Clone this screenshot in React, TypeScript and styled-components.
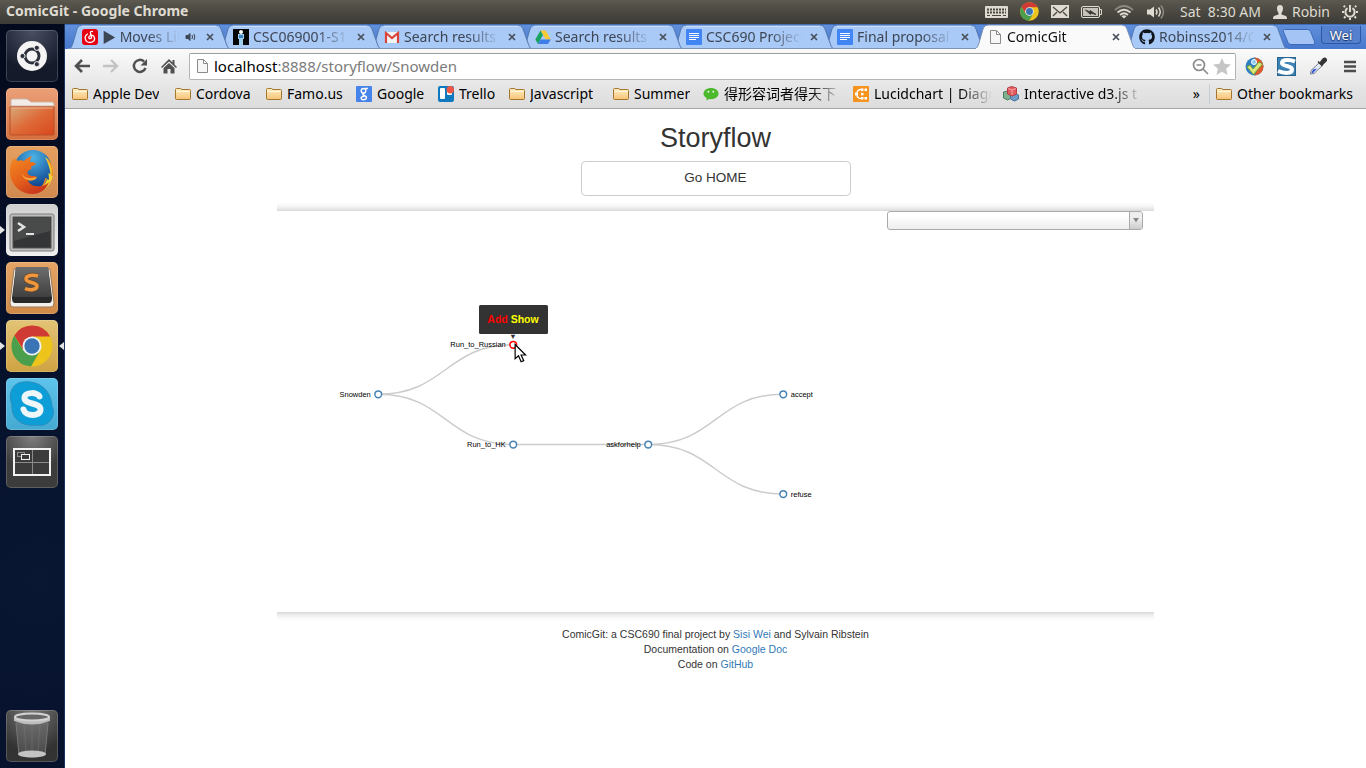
import React from 'react';
import styled, { createGlobalStyle, css } from 'styled-components';
import { FaGithub } from 'react-icons/fa';

const GlobalStyle = createGlobalStyle`
  *, *::before, *::after { box-sizing: border-box; }
  body { margin: 0; background: #fff; }
  button { font: inherit; color: inherit; padding: 0; border: 0; background: none; }
  svg { display: block; flex: none; }
`;

const uiFont = '"Noto Sans", "Noto Sans CJK SC", sans-serif';

/* ---------- shell ---------- */

const Desktop = styled.div`
  display: flex;
  flex-direction: column;
  min-height: 100vh;
  font-family: ${uiFont};
`;

const TopPanel = styled.header`
  display: flex;
  align-items: center;
  justify-content: space-between;
  height: 24px;
  padding: 0 8px 0 6px;
  background: linear-gradient(#5b5950, #4a4840 50%, #3c3b37);
  color: #dfdbd2;
  font-size: 14px;
  white-space: nowrap;
`;

const WindowTitle = styled.strong`
  font-size: 14px;
  font-weight: 700;
  line-height: 20px;
  padding-bottom: 2px;
`;

const Indicators = styled.div`
  display: flex;
  align-items: center;
  gap: 12px;
  line-height: 20px;
  padding-bottom: 1px;
`;

const StatusGroup = styled.div`
  display: flex;
  align-items: center;
  gap: 12px;
  margin-right: 2px;
`;

const UserName = styled.span`
  display: flex;
  align-items: center;
  gap: 5px;
`;

const Workspace = styled.div`
  display: flex;
  flex: 1;
`;

const Launcher = styled.nav`
  display: flex;
  flex-direction: column;
  gap: 6px;
  width: 65px;
  flex: none;
  padding: 6px;
  background: radial-gradient(circle at 60% 75%, #091733, #06102a 45%, #040a1d);
  border-right: 1px solid #1c3560;
`;

const LauncherButton = styled.button<{ $bg: string; $last?: boolean; $left?: boolean; $right?: boolean }>`
  position: relative;
  width: 52px;
  height: 52px;
  flex: none;
  border-radius: 5px;
  background: ${p => p.$bg};
  box-shadow: inset 0 0 0 1px rgba(255, 255, 255, 0.18);
  ${p => p.$last && css`margin-top: auto;`}
  ${p => p.$left && css`
    &::before {
      content: '';
      position: absolute;
      left: -6px;
      top: 22px;
      border: 4px solid transparent;
      border-left: 5px solid #e4e4e4;
      border-right: 0;
    }
  `}
  ${p => p.$right && css`
    &::after {
      content: '';
      position: absolute;
      right: -6px;
      top: 22px;
      border: 4px solid transparent;
      border-right: 5px solid #e4e4e4;
      border-left: 0;
    }
  `}
`;

const LauncherIcon = styled.span`
  display: grid;
  place-items: center;
`;

const Browser = styled.main`
  display: flex;
  flex-direction: column;
  flex: 1;
  min-width: 0;
  background: #fff;
`;

/* ---------- tab strip ---------- */

const TabStrip = styled.div`
  display: flex;
  height: 25px;
  padding-left: 3px;
  background: linear-gradient(#6190dc, #4878cd);
  box-shadow: inset 0 1px #3e6cba;
`;

const TabItem = styled.div<{ $order: number }>`
  position: relative;
  z-index: ${p => p.$order};
  display: flex;
  align-items: center;
  flex: 0 1 151px;
  min-width: 0;
  height: 25px;
  padding: 0 3px 0 14px;
`;

const TabShape = styled.svg`
  position: absolute;
  left: 0;
  top: 0;
  width: calc(100% + 12px);
  height: 25px;
`;

const TabLabel = styled.button<{ $active?: boolean }>`
  position: relative;
  display: flex;
  align-items: center;
  gap: 4px;
  flex: 1;
  min-width: 0;
  font-size: 14px;
  line-height: 20px;
  color: ${p => (p.$active ? '#111' : '#3d4654')};
`;

const fade = css`
  overflow: hidden;
  white-space: nowrap;
  mask-image: linear-gradient(to left, transparent, #000 32px);
`;

const TabText = styled.span`
  ${fade}
  flex: 1;
  text-align: left;
`;

const CloseButton = styled.button`
  position: relative;
  margin-left: 6px;
  width: 12px;
  height: 12px;
  display: grid;
  place-items: center;
`;

const NewTabButton = styled.button`
  margin: 5px 0 0 6px;
  width: 34px;
  height: 16px;
`;

const ProfileButton = styled.button`
  margin: 2px 5px 0 auto;
  width: 40px;
  height: 18px;
  border: 1px solid #2c57a5;
  border-top: 0;
  border-radius: 0 0 4px 4px;
  background: #5580cd;
  color: #fff;
  font-size: 13px;
  line-height: 18px;
  text-shadow: 0 0 2px #1b3566, 0 1px 1px #1b3566;
`;

/* ---------- toolbar ---------- */

const Toolbar = styled.div`
  display: flex;
  align-items: center;
  height: 32px;
  padding: 2px 8px 0;
  gap: 12px;
  background: linear-gradient(#fafafa, #e9e9e9);
`;

const NavButtons = styled.div`
  display: flex;
  gap: 12px;
`;

const IconButton = styled.button`
  display: grid;
  place-items: center;
  width: 17px;
  height: 20px;
`;

const Omnibox = styled.label`
  display: flex;
  align-items: center;
  gap: 4px;
  flex: 1;
  min-width: 0;
  height: 27px;
  margin-right: -3px;
  padding: 0 4px 0 5px;
  border: 1px solid #b4b4b4;
  border-top-color: #9d9d9d;
  border-radius: 2px;
  background: #fff;
`;

const AddressField = styled.span`
  position: relative;
  flex: 1;
  display: flex;
  font-size: 15px;
  line-height: 24px;
`;

const AddressText = styled.span`
  color: #7b7b7b;
  b { font-weight: 400; color: #000; }
`;

const AddressInput = styled.input`
  position: absolute;
  inset: 0;
  width: 100%;
  padding: 0;
  border: 0;
  outline: 0;
  background: transparent;
  font: inherit;
`;

const Extensions = styled.div`
  display: flex;
  align-items: center;
  gap: 15px;
`;

const BookmarksBar = styled.div`
  display: flex;
  align-items: center;
  height: 28px;
  padding: 0 8px 1px 7px;
  border-bottom: 1px solid #a5a5a5;
  background: linear-gradient(#e8e8e8, #dcdcdc);
  font-size: 14px;
  line-height: 20px;
  color: #000;
`;

const Bookmark = styled.a<{ $width: number }>`
  display: flex;
  align-items: center;
  gap: 5px;
  flex: 0 1 ${p => p.$width}px;
  min-width: 0;
  color: inherit;
  text-decoration: none;
  white-space: nowrap;
`;

const BookmarkText = styled.span<{ $fade?: boolean }>`
  overflow: hidden;
  ${p => p.$fade && css`${fade} flex: 0 0 118px;`}
`;

const Overflow = styled.button`
  margin-left: auto;
  padding: 0 9px;
  font-size: 14px;
`;

const Separator = styled.span`
  width: 1px;
  height: 20px;
  margin-right: 6px;
  background: #c4ccd6;
`;

/* ---------- page (shown at the 75% zoom level) ---------- */

const Page = styled.div`
  zoom: 0.75;
  font-family: "Liberation Sans", Arial, sans-serif;
  font-size: 14px;
  line-height: 20px;
  color: #333;
`;

const Container = styled.div`
  width: 100%;
  max-width: 1170px;
  margin: 0 auto;
`;

const PageHeader = styled.div`
  display: flex;
  flex-direction: column;
  align-items: center;
  padding-top: 19px;
`;

const Title = styled.h1`
  margin: 0 0 10px;
  font-size: 36px;
  font-weight: 500;
  line-height: 40px;
`;

const HomeButton = styled.button`
  width: 360px;
  height: 47px;
  border: 1px solid #ccc;
  border-radius: 6px;
  background: #fff;
  color: #333;
  font-size: 18px;
  line-height: 24px;
`;

const Rule = styled.hr<{ $up?: boolean }>`
  height: 12px;
  margin: ${p => (p.$up ? '8px 0 0' : '0 0 8px')};
  border: 0;
  box-shadow: inset 0 ${p => (p.$up ? '-12px' : '12px')} 12px -12px rgba(0, 0, 0, 0.3);
`;

const PickerRow = styled.div`
  display: flex;
  justify-content: flex-end;
  padding-right: 15px;
`;

const Picker = styled.div`
  position: relative;
  width: 342px;
  height: 25px;
`;

const PickerSelect = styled.select`
  appearance: none;
  display: block;
  width: 100%;
  height: 100%;
  border: 1px solid #aaa;
  border-radius: 4px;
  background: linear-gradient(#fff 20%, #eee);
`;

const PickerArrow = styled.span`
  position: absolute;
  top: 1px;
  right: 1px;
  bottom: 1px;
  width: 18px;
  display: grid;
  place-items: center;
  border-left: 1px solid #aaa;
  border-radius: 0 3px 3px 0;
  background: linear-gradient(#eee 40%, #ccc);
  pointer-events: none;
`;

const Flow = styled.div`
  position: relative;
  height: 509px;
`;

const FlowChart = styled.svg`
  width: 100%;
  height: 100%;
  font-size: 10px;
  fill: #000;
`;

const Tip = styled.div`
  position: absolute;
  left: 269px;
  top: 100px;
  width: 92px;
  padding: 12px 0;
  border-radius: 2px;
  background: #333;
  font-weight: 700;
  line-height: 15px;
  text-align: center;
  &::after {
    content: '\\25BC';
    position: absolute;
    left: 0;
    top: 100%;
    width: 100%;
    margin-top: -1px;
    font-size: 10px;
    line-height: 10px;
    font-weight: 400;
    color: #333;
  }
`;

const TipLink = styled.a<{ $color: string }>`
  color: ${p => p.$color};
  text-decoration: none;
`;

const Pointer = styled.svg`
  position: absolute;
  left: 316px;
  top: 151px;
`;

const Footer = styled.footer`
  text-align: center;
  p { margin: 0; }
  a { color: #337ab7; text-decoration: none; }
`;

/* ---------- icons ---------- */

const ChromeLogo = ({ size }: { size: number }) => (
  <svg width={size} height={size} viewBox="0 0 44 44">
    <circle cx="22" cy="22" r="21.500" fill="#ecc41c" />
    <path d="M22 12h19A21.500 21.500 0 0 0 3.500 11L13.500 27 22 22z" fill="#d03a35" />
    <path d="M3.500 11A21.500 21.500 0 0 0 21 43.500L30.500 27 22 22l-9 5z" fill="#4b9f4c" />
    <circle cx="22" cy="22" r="10" fill="#eef1f2" />
    <circle cx="22" cy="22" r="8" fill="#3a74b4" />
  </svg>
);

const UbuntuIcon = () => (
  <svg width="52" height="52" viewBox="0 0 52 52">
    <circle cx="26" cy="26" r="15" fill="#f4f4f4" />
    <circle cx="26" cy="26" r="7" fill="none" stroke="#2c303c" strokeWidth="3" />
    <g fill="#2c303c" stroke="#f4f4f4" strokeWidth="1">
      <circle cx="16.500" cy="26" r="2.600" />
      <circle cx="30.800" cy="17.800" r="2.600" />
      <circle cx="30.800" cy="34.200" r="2.600" />
    </g>
  </svg>
);

const FilesIcon = () => (
  <svg width="52" height="52" viewBox="0 0 52 52">
    <defs>
      <linearGradient id="files" x1="0" y1="0" x2="1" y2="1">
        <stop offset="0" stopColor="#d8a878" /><stop offset=".5" stopColor="#de6a38" /><stop offset="1" stopColor="#d8481c" />
      </linearGradient>
    </defs>
    <path d="M5 18v-6q0-1 1-1h15l4 3h21q2 0 2 2v2z" fill="#f3ece6" stroke="#c9b5a8" />
    <path d="M4 19h44v27q0 1-1 1H5q-1 0-1-1z" fill="url(#files)" stroke="#b94f28" />
    <path d="M5 20h42" stroke="#f3b492" />
  </svg>
);

const FirefoxIcon = () => (
  <svg width="52" height="52" viewBox="0 0 52 52">
    <defs>
      <radialGradient id="globe" cx=".5" cy=".2" r=".8"><stop offset="0" stopColor="#4cb4e6" /><stop offset="1" stopColor="#0d3f8c" /></radialGradient>
      <linearGradient id="fox" x1="0" y1="0" x2=".6" y2="1"><stop offset="0" stopColor="#f48a20" /><stop offset=".6" stopColor="#e4601b" /><stop offset="1" stopColor="#c8371c" /></linearGradient>
    </defs>
    <circle cx="27" cy="23" r="19" fill="url(#globe)" />
    <path d="M39 11c7 5 9 11 8 17-1 11-10 19-20 19 8-3 12-7 14-14l2 1-.5-7 2 1c-.5-6-2.500-11-5.500-17z" fill="#f4d431" />
    <path d="M42 14c4 5 5 11 4 16M40 32c-1 6-5 11-10 14" fill="none" stroke="#f08a22" strokeWidth="1.500" />
    <path d="M8 12c-5 7-5 16-2 23 4 8 11 13 20 13 8 0 14-4 17-12-4 4-8 5-12 4-4 0-8-2-9-6 4 2 7-1 9-3-2-2-5 0-8-2-2-1-2-4 0-5 2 0 3-1 2-3l5-3c-1-2-4-2-6-2 0-3 1-4 2-6-4 1-6 3-8 5-3-1-5-1-6 0-2-1-3-2-4-3z" fill="url(#fox)" />
    <path d="M31 31c-2 4-6 4-9 3-4-1-6-4-6-7 2 5 6 5 9 5z" fill="#f9a535" />
  </svg>
);

const TerminalIcon = () => (
  <svg width="52" height="52" viewBox="0 0 52 52">
    <rect x="4" y="10" width="44" height="37" rx="2" fill="#bdbdbd" stroke="#7c7c7c" />
    <rect x="7" y="13" width="38" height="31" fill="#333536" stroke="#555" />
    <path d="M8 14h36v13L8 37z" fill="#494b4b" />
    <path d="m12 19 6 4-6 4" fill="none" stroke="#e3e3e3" strokeWidth="2.500" />
    <path d="M20 30h8" stroke="#e3e3e3" strokeWidth="2" />
  </svg>
);

const SublimeIcon = () => (
  <svg width="52" height="52" viewBox="0 0 52 52">
    <defs><linearGradient id="key" x1="0" y1="0" x2="0" y2="1"><stop offset="0" stopColor="#6d6d6d" /><stop offset="1" stopColor="#404040" /></linearGradient></defs>
    <path d="M8 7h36l4 34q0 4-3 4H7q-3 0-3-4z" fill="#f3f0ec" stroke="#9b7a58" />
    <path d="M10 5h32l4 31q0 5-3 5H9q-3 0-3-5z" fill="#292929" />
    <path d="M10 5h32l3 28q0 2-2 2H9q-2 0-2-2z" fill="url(#key)" />
    <path d="M32 14c-5-1.500-12-1-12 3 0 4 11 3 11 7s-7 4.500-12 2.500" fill="none" stroke="#6a4a2a" strokeWidth="5" />
    <path d="M32 14c-5-1.500-12-1-12 3 0 4 11 3 11 7s-7 4.500-12 2.500" fill="none" stroke="#f0963c" strokeWidth="3.500" />
  </svg>
);

const SkypeIcon = () => (
  <svg width="52" height="52" viewBox="0 0 52 52">
    <path d="M18 4c10-1 26 3 28 24 5 10-4 22-16 19C14 49 5 39 6 27 1 14 8 4 18 4z" fill="#0d9ed8" stroke="#2b8cbb" />
    <path d="M33.500 18.500c-1.500-4.500-15-5-15 1.500 0 7 16 4 16 11.500 0 7.500-15 7-17 0" fill="none" stroke="#eef6fa" strokeWidth="6" strokeLinecap="round" />
  </svg>
);

const WorkspaceIcon = () => (
  <svg width="52" height="52" viewBox="0 0 52 52" fill="none">
    <rect x="8" y="13" width="36" height="26" fill="#3b3b3b" stroke="#f2f2f2" strokeWidth="2" />
    <path d="M26.500 14v24M9 26.500h34" stroke="#8b8b8b" />
    <rect x="11.500" y="16.500" width="7" height="4" stroke="#8b8b8b" />
    <rect x="15.500" y="18.500" width="8" height="5" fill="#3b3b3b" stroke="#f2f2f2" />
  </svg>
);

const TrashIcon = () => (
  <svg width="52" height="52" viewBox="0 0 52 52">
    <path d="M10 13h32l-3 32q-13 4-26 0z" fill="#7a7a7a" fillOpacity=".4" stroke="#777" />
    <path d="M18 14l2 30M26 15v30M34 14l-2 30" stroke="#777" strokeOpacity=".5" />
    <ellipse cx="26" cy="44" rx="14" ry="3.500" fill="#c4c4c4" />
    <path d="M8 7v4q18 7 36 0V7z" fill="#bdbdbd" />
    <ellipse cx="26" cy="7" rx="17" ry="3.500" fill="#666" stroke="#d2d2d2" strokeWidth="2" />
  </svg>
);

const FolderIcon = () => (
  <svg width="16" height="14" viewBox="0 0 16 14">
    <defs><linearGradient id="folder" x1="0" y1="0" x2="0" y2="1"><stop offset="0" stopColor="#fff0c4" /><stop offset="1" stopColor="#f6c276" /></linearGradient></defs>
    <path d="M.5 11.500v-9q0-1 1-1h4q1 0 1 1h8q1 0 1 1v8q0 1-1 1h-13q-1 0-1-1z" fill="url(#folder)" stroke="#a5762f" />
    <path d="M1.500 4.500h13" stroke="#fff6dc" />
  </svg>
);

const PageIcon = () => (
  <svg width="15" height="16" viewBox="0 0 15 16">
    <path d="M2.500 1.500h6l4 4v9h-10zM8.500 1.500v4h4" fill="#f6f6f6" stroke="#8b8b8b" />
  </svg>
);

const NetEaseIcon = () => (
  <svg width="16" height="16" viewBox="0 0 16 16">
    <rect width="16" height="16" rx="3" fill="#e60012" />
    <path d="M10.500 2.500c-1.500-.5-2.500.5-2 2l1 4c.3 1.500-2.700 1.800-2.700-.2 0-2 3.700-3 5.200-.8 1.700 3-.5 6-4 6-5 0-6.500-6-2.500-8.500" fill="none" stroke="#fff" strokeWidth="1.300" strokeLinecap="round" />
  </svg>
);

const CampusIcon = () => (
  <svg width="16" height="16" viewBox="0 0 16 16">
    <rect width="16" height="16" fill="#050505" />
    <circle cx="8" cy="3" r="2" fill="#fff" />
    <path d="M5 5h6v5h-1v6H6v-6H5z" fill="#9fcdec" />
    <path d="M6 6h4v3H6z" fill="#3c82bd" />
  </svg>
);

const GmailIcon = () => (
  <svg width="16" height="16" viewBox="0 0 16 16">
    <path d="M1 3h14v11H1z" fill="#f3f3f3" />
    <path d="M2 14V4l6 5 6-5v10" fill="none" stroke="#d8453a" strokeWidth="2.200" />
  </svg>
);

const DriveIcon = () => (
  <svg width="16" height="16" viewBox="0 0 16 16">
    <path d="M5.500 1.500h5l5.300 9h-5z" fill="#fbc932" />
    <path d="M5.500 1.500 8 6l-5 9L.3 10.500z" fill="#1aa260" />
    <path d="M5.500 10.500h10.300L13 15H3z" fill="#3f7de8" />
  </svg>
);

const DocsIcon = () => (
  <svg width="16" height="16" viewBox="0 0 16 16">
    <rect width="16" height="16" rx="1" fill="#4285f4" />
    <path d="M3 4.500h10M3 6.500h10M3 8.500h10M3 10.500h7" stroke="#fff" />
  </svg>
);

const GoogleIcon = () => (
  <svg width="16" height="16" viewBox="0 0 16 16">
    <rect width="16" height="16" rx="1" fill="#4683ea" />
    <g fill="none" stroke="#fff" strokeWidth="1.400">
      <circle cx="7.500" cy="4.800" r="2.300" />
      <path d="M9 2.500h3M9 6.800c-4 1-2 2.200 0 3 2.500 1 1.500 4-1.300 4-3.500 0-3.700-3.500.8-3.600" />
    </g>
  </svg>
);

const TrelloIcon = () => (
  <svg width="16" height="16" viewBox="0 0 16 16">
    <rect width="16" height="16" rx="2" fill="#0f79bf" />
    <rect x="2" y="2" width="5" height="11" rx="1" fill="#fff" />
    <rect x="9" y="2" width="5" height="7" rx="1" fill="#fff" />
    <circle cx="12.300" cy="3.700" r="3.700" fill="#ef5744" />
  </svg>
);

const WeChatIcon = () => (
  <svg width="16" height="16" viewBox="0 0 17 16">
    <path d="M8.500 1.500c4.500 0 8 2.600 8 6s-3.500 6-8 6l-2-.2L3.500 15l.5-2.500C2 11.500.5 9.700.5 7.500c0-3.400 3.500-6 8-6z" fill="#4cb82c" />
    <circle cx="5.700" cy="5.500" r="1" fill="#fff" /><circle cx="11" cy="5.500" r="1" fill="#fff" />
  </svg>
);

const LucidIcon = () => (
  <svg width="16" height="16" viewBox="0 0 16 16">
    <rect width="16" height="16" rx="1" fill="#f79420" />
    <path d="M4 7.500q0-4 4-4h1M4 8.500q0 4 4 4h1" fill="none" stroke="#fff" strokeWidth="1.300" />
    <g fill="#fff"><rect x="2" y="6.500" width="3" height="3" /><rect x="8" y="2.500" width="2.500" height="2.500" /><rect x="11.500" y="2.500" width="2.500" height="2.500" /><rect x="8" y="6.800" width="2.500" height="2.500" /><rect x="8" y="11" width="2.500" height="2.500" /><rect x="11.500" y="11" width="2.500" height="2.500" /></g>
  </svg>
);

const CubesIcon = () => (
  <svg width="16" height="16" viewBox="0 0 16 16">
    <path d="M0.500 6l4-1 4 2v5l-4 2-4-2z" fill="#7fb08d" stroke="#4c7d60" />
    <path d="M7.500 8l4-1 4 2v4l-4 2-4-2z" fill="#6f9bc8" stroke="#48719b" />
    <path d="M4.500 2l4-1.500 5 1.500v6l-4 2-5-2z" fill="#e25b5f" stroke="#b53c44" />
    <path d="m5 2.500 4 1.500 4-1.500M9 4v5" fill="none" stroke="#f3a4a4" />
  </svg>
);

const GithubMark = () => <FaGithub size={16} color="#10151c" />;

const StatusIcons = () => (
  <StatusGroup>
    <svg width="23" height="12" viewBox="0 0 23 12">
      <rect width="23" height="12" rx="1" fill="#dfdbd2" />
      <path d="M2 3.500h19M2 6.500h19" stroke="#4a4840" strokeWidth="2" strokeDasharray="2 1" />
      <path d="M2 9.500h3M7 9.500h9M18 9.500h3" stroke="#4a4840" />
    </svg>
    <ChromeLogo size={19} />
    <svg width="18" height="13" viewBox="0 0 18 13">
      <rect width="18" height="13" fill="#dfdbd2" />
      <path d="m2 2 7 6 7-6M2 11l4-4M16 11l-4-4" fill="none" stroke="#4a4840" strokeWidth="1.300" />
    </svg>
    <svg width="21" height="12" viewBox="0 0 21 12">
      <rect x=".5" y=".5" width="18" height="11" rx="1.500" fill="none" stroke="#dfdbd2" />
      <rect x="2" y="2" width="15" height="8" fill="#c6c2b9" />
      <path d="M19 3.500h1.500v5H19" fill="none" stroke="#dfdbd2" />
      <path d="M4.500 4 9 6V4.500l6 4-5.500-1.500v1.500z" fill="#3c3b37" stroke="#3c3b37" />
    </svg>
    <svg width="20" height="14" viewBox="0 0 20 14" fill="none" strokeWidth="1.700">
      <path d="M1 5Q10-3 19 5" stroke="#8d8a82" />
      <path d="M3.500 7.500Q10 2 16.500 7.500M6 10Q10 6.500 14 10" stroke="#dfdbd2" />
      <path d="m10 13.500-2.500-2.300q2.500-2 5 0z" fill="#dfdbd2" />
    </svg>
    <svg width="20" height="16" viewBox="0 0 20 16" fill="none" stroke="#dfdbd2" strokeWidth="1.500">
      <path d="M1 5.500h3l4-3v11l-4-3H1z" fill="#dfdbd2" stroke="none" />
      <path d="M10 5.500q2 2.500 0 5M12.500 3.500q3.500 4.500 0 9" />
      <path d="M15 1.500q5 6.500 0 13" stroke="#8d8a82" />
    </svg>
  </StatusGroup>
);

/* ---------- parts ---------- */

type TabData = { title: string; icon: React.ReactNode; active?: boolean; audio?: boolean };

const tabs: TabData[] = [
  { title: '▶ Moves Like', icon: <NetEaseIcon />, audio: true },
  { title: 'CSC069001-S15', icon: <CampusIcon /> },
  { title: 'Search results', icon: <GmailIcon /> },
  { title: 'Search results', icon: <DriveIcon /> },
  { title: 'CSC690 Project', icon: <DocsIcon /> },
  { title: 'Final proposal', icon: <DocsIcon /> },
  { title: 'ComicGit', icon: <PageIcon />, active: true },
  { title: 'Robinss2014/C', icon: <GithubMark /> },
];

const Tab = ({ tab, order }: { tab: TabData; order: number }) => (
  <TabItem $order={order}>
    <TabShape viewBox="0 0 163 25" preserveAspectRatio="none">
      <path
        d="M0 25C3 25 4 22 5 19L9 5Q10 1 14 1H148Q152 1 153 5L158 19C159 22 160 25 163 25z"
        fill={tab.active ? '#fafafa' : '#a9c9f6'}
        stroke={tab.active ? '#7890b6' : '#5377b0'}
      />
      {tab.active && <path d="M2 24.500H161" stroke="#fafafa" />}
      {!tab.active && <path d="M14 2.500H148" stroke="#c9defb" />}
      {!tab.active && <path d="M0 24.500H163" stroke="#7d93b8" />}
    </TabShape>
    <TabLabel $active={tab.active}>
      {tab.icon}
      <TabText>{tab.title}</TabText>
      {tab.audio && (
        <svg width="14" height="12" viewBox="0 0 14 12" fill="none" stroke="#3d4654">
          <path d="M2 4.500h2l2-2v7l-2-2H2z" fill="#3d4654" />
          <path d="M8 4q1 2 0 4M10 3q1.500 3 0 6" />
        </svg>
      )}
    </TabLabel>
    <CloseButton aria-label="Close tab">
      <svg width="8" height="8" viewBox="0 0 8 8"><path d="m1 1 6 6m0-6L1 7" stroke="#484f5a" strokeWidth="1.700" /></svg>
    </CloseButton>
  </TabItem>
);

const bookmarks = [
  { text: 'Apple Dev', width: 103, icon: <FolderIcon /> },
  { text: 'Cordova', width: 91, icon: <FolderIcon /> },
  { text: 'Famo.us', width: 90, icon: <FolderIcon /> },
  { text: 'Google', width: 82, icon: <GoogleIcon /> },
  { text: 'Trello', width: 71, icon: <TrelloIcon /> },
  { text: 'Javascript', width: 104, icon: <FolderIcon /> },
  { text: 'Summer', width: 90, icon: <FolderIcon /> },
  { text: '得形容词者得天下', width: 150, icon: <WeChatIcon />, fade: true },
  { text: 'Lucidchart | Diagr', width: 150, icon: <LucidIcon />, fade: true },
  { text: 'Interactive d3.js t', width: 150, icon: <CubesIcon />, fade: true },
];

const launcherItems = [
  { name: 'Dash', bg: 'radial-gradient(circle at 50% 0, #4b5164, #141a2a 70%)', icon: <UbuntuIcon /> },
  { name: 'Files', bg: 'linear-gradient(#eba078, #d5703e)', icon: <FilesIcon /> },
  { name: 'Firefox', bg: 'linear-gradient(#e5a060, #d08a50)', icon: <FirefoxIcon /> },
  { name: 'Terminal', bg: 'linear-gradient(#cfcfcf, #efefef)', icon: <TerminalIcon />, left: true },
  { name: 'Sublime Text', bg: 'linear-gradient(#e5a565, #d08a48)', icon: <SublimeIcon /> },
  { name: 'Chrome', bg: 'linear-gradient(#e2c376, #cfa343)', icon: <ChromeLogo size={42} />, left: true, right: true },
  { name: 'Skype', bg: 'linear-gradient(#5fc4ec, #45a9d2)', icon: <SkypeIcon /> },
  { name: 'Workspaces', bg: 'radial-gradient(circle at 50% 0, #808080, #3c3c3c 60%)', icon: <WorkspaceIcon /> },
  { name: 'Trash', bg: 'radial-gradient(circle at 50% 0, #777, #333 70%)', icon: <TrashIcon />, last: true },
];

const links = [
  'M135 219C225 219 225 153 315 153',
  'M135 219C225 219 225 286 315 286',
  'M315 286H495',
  'M495 286C585 286 585 219 675 219',
  'M495 286C585 286 585 352 675 352',
];

const nodes = [
  { name: 'Snowden', x: 135, y: 219 },
  { name: 'Run_to_Russian', x: 315, y: 153, hot: true },
  { name: 'Run_to_HK', x: 315, y: 286 },
  { name: 'askforhelp', x: 495, y: 286 },
  { name: 'accept', x: 675, y: 219, leaf: true },
  { name: 'refuse', x: 675, y: 352, leaf: true },
];

export default function App() {
  return (
    <Desktop>
      <GlobalStyle />
      <TopPanel>
        <WindowTitle>ComicGit - Google Chrome</WindowTitle>
        <Indicators>
          <StatusIcons />
          <span>Sat&nbsp; 8:30 AM</span>
          <UserName>
            <svg width="14" height="14" viewBox="0 0 14 14" fill="#dfdbd2">
              <path d="M7 0c2.200 0 3 1.500 3 3.500S9 7 8.500 8v1.500L13 11q1 .5 1 3H0q0-2.500 1-3l4.500-1.500V8C5 7 4 5.500 4 3.500S4.800 0 7 0z" />
            </svg>
            Robin
          </UserName>
          <svg width="16" height="16" viewBox="0 0 16 16" fill="none" stroke="#dfdbd2">
            <path d="M5.500 4.200a4.600 4.600 0 1 0 5 0" strokeWidth="2" />
            <path d="M8 1v7" strokeWidth="2" />
            <path d="M3 3 1.700 1.700M13 3l1.300-1.300M2 8H0M14 8h2M3.500 12.500 2 14M12.500 12.500 14 14M8 14v2" strokeWidth="2" />
          </svg>
        </Indicators>
      </TopPanel>

      <Workspace>
        <Launcher>
          {launcherItems.map(i => (
            <LauncherButton key={i.name} aria-label={i.name} $bg={i.bg} $left={i.left} $right={i.right} $last={i.last}>
              <LauncherIcon>{i.icon}</LauncherIcon>
            </LauncherButton>
          ))}
        </Launcher>

        <Browser>
          <TabStrip>
            {tabs.map((t, i) => (
              <Tab key={i} tab={t} order={t.active ? 20 : 10 - i} />
            ))}
            <NewTabButton aria-label="New tab">
              <svg width="34" height="16" viewBox="0 0 34 16">
                <path d="M2.500.5h23q2 0 3 2l4 10q1 3-1.500 3H9q-2 0-3-2L1.500 3Q.5.500 2.500.5z" fill="#a3c4f4" stroke="#3d69b8" />
              </svg>
            </NewTabButton>
            <ProfileButton>Wei</ProfileButton>
          </TabStrip>

          <Toolbar>
            <NavButtons>
              <IconButton aria-label="Back">
                <svg width="16" height="14" viewBox="0 0 16 14" fill="none" stroke="#505050" strokeWidth="2.600"><path d="M16 7H3M8 1 2 7l6 6" /></svg>
              </IconButton>
              <IconButton aria-label="Forward">
                <svg width="16" height="14" viewBox="0 0 16 14" fill="none" stroke="#c3c3c3" strokeWidth="2.400"><path d="M0 7h13M8 1l6 6-6 6" /></svg>
              </IconButton>
              <IconButton aria-label="Reload">
                <svg width="16" height="16" viewBox="0 0 16 16"><path d="M13.500 10A6 6 0 1 1 12 3.500" fill="none" stroke="#505050" strokeWidth="2.500" /><path d="M15 1v6.500H8.500z" fill="#505050" /></svg>
              </IconButton>
              <IconButton aria-label="Home">
                <svg width="16" height="16" viewBox="0 0 16 16" fill="#505050"><path d="M8 1 0 9l1 1 7-6.500 7 6.500 1-1-2.500-2.500V2h-2v2.500z" /><path d="m8 5-5.500 5v5.500h4V11h3v4.500h4V10z" /></svg>
              </IconButton>
            </NavButtons>
            <Omnibox>
              <PageIcon />
              <AddressField>
                <AddressText><b>localhost</b>:8888/storyflow/Snowden</AddressText>
                <AddressInput aria-label="Address" />
              </AddressField>
              <svg width="17" height="17" viewBox="0 0 17 17" fill="none" stroke="#8a8a8a" strokeWidth="1.700">
                <circle cx="7" cy="7" r="5.500" /><path d="m11 11 5 5M4.500 7h5" />
              </svg>
              <svg width="18" height="17" viewBox="0 0 18 17"><path d="m9 0 2.600 5.800 6.400.7-4.800 4.200 1.400 6.300L9 13.700 3.400 17l1.400-6.300L0 6.500l6.400-.7z" fill="#c6c6c6" /></svg>
            </Omnibox>
            <Extensions>
              <IconButton aria-label="Checker">
                <svg width="19" height="19" viewBox="0 0 19 19">
                  <circle cx="9.500" cy="9.500" r="9" fill="#2f7fc0" />
                  <path d="M9.500.5a9 9 0 0 1 0 18l4-9z" fill="#dd5a2c" />
                  <circle cx="9" cy="5" r="2.500" fill="#8cc8ee" stroke="#fff" />
                  <path d="m2 10 3-2 3 4 6-7 3.500 2L8.500 17.500z" fill="#dbe97c" stroke="#7c9f31" />
                </svg>
              </IconButton>
              <IconButton aria-label="Stylish">
                <svg width="19" height="19" viewBox="0 0 19 19">
                  <rect x=".5" y=".5" width="18" height="18" fill="#3d82b4" stroke="#29648f" />
                  <path d="M18 4.500C12 2 5 2.500 5 6c0 4 10 2 10 6.500S7 16.500 1 14" fill="none" stroke="#fff" strokeWidth="4" />
                </svg>
              </IconButton>
              <IconButton aria-label="Colour picker">
                <svg width="18" height="18" viewBox="0 0 18 18">
                  <path d="m10 6 3 3-8 7.500-3.500.500.500-3.500z" fill="#e5ebf7" stroke="#77808f" />
                  <path d="m4 12.500 4-1-4 4.500H2.500z" fill="#2c50d4" />
                  <path d="m9 4.500 4.500 4.500M11 6l3-4q2-1.500 3 0 1 1.500-.5 2.500L13 8z" fill="#343434" stroke="#343434" strokeWidth="1.400" />
                </svg>
              </IconButton>
              <IconButton aria-label="Menu">
                <svg width="14" height="13" viewBox="0 0 14 13"><path d="M1 2h12M1 6.500h12M1 11h12" stroke="#4c4c4c" strokeWidth="2.600" /></svg>
              </IconButton>
            </Extensions>
          </Toolbar>

          <BookmarksBar>
            {bookmarks.map(b => (
              <Bookmark key={b.text} href="#" $width={b.width}>
                {b.icon}
                <BookmarkText $fade={b.fade}>{b.text}</BookmarkText>
              </Bookmark>
            ))}
            <Overflow aria-label="More bookmarks">»</Overflow>
            <Separator />
            <Bookmark href="#" $width={142}>
              <FolderIcon />
              <BookmarkText>Other bookmarks</BookmarkText>
            </Bookmark>
          </BookmarksBar>

          <Page>
            <Container>
              <PageHeader>
                <Title>Storyflow</Title>
                <HomeButton>Go HOME</HomeButton>
              </PageHeader>
              <Rule $up />
              <PickerRow>
                <Picker>
                  <PickerSelect aria-label="Story" />
                  <PickerArrow>
                    <svg width="8" height="6" viewBox="0 0 8 6"><path d="M0 0h8L4 6z" fill="#888" /></svg>
                  </PickerArrow>
                </Picker>
              </PickerRow>
              <Flow>
                <FlowChart>
                  <g fill="none" stroke="#ccc" strokeWidth="2">
                    {links.map(d => <path key={d} d={d} />)}
                  </g>
                  {nodes.map(n => (
                    <g key={n.name}>
                      <circle cx={n.x} cy={n.y} r="4.500" fill="#fff" stroke={n.hot ? 'red' : 'steelblue'} strokeWidth="2" />
                      <text x={n.leaf ? n.x + 10 : n.x - 10} y={n.y} dy=".35em" textAnchor={n.leaf ? 'start' : 'end'}>{n.name}</text>
                    </g>
                  ))}
                </FlowChart>
                <Tip>
                  <TipLink href="#" $color="red">Add</TipLink> <TipLink href="#" $color="yellow">Show</TipLink>
                </Tip>
                <Pointer width="17" height="27" viewBox="0 0 17 27">
                  <path d="M1.500 2v19l4.500-4 3.500 8 3.500-1.500-3.500-7.500h6z" fill="#fff" stroke="#000" strokeWidth="1.600" />
                </Pointer>
              </Flow>
              <Rule />
              <Footer>
                <p>ComicGit: a CSC690 final project by <a href="#">Sisi Wei</a> and Sylvain Ribstein</p>
                <p>Documentation on <a href="#">Google Doc</a></p>
                <p>Code on <a href="#">GitHub</a></p>
              </Footer>
            </Container>
          </Page>
        </Browser>
      </Workspace>
    </Desktop>
  );
}
